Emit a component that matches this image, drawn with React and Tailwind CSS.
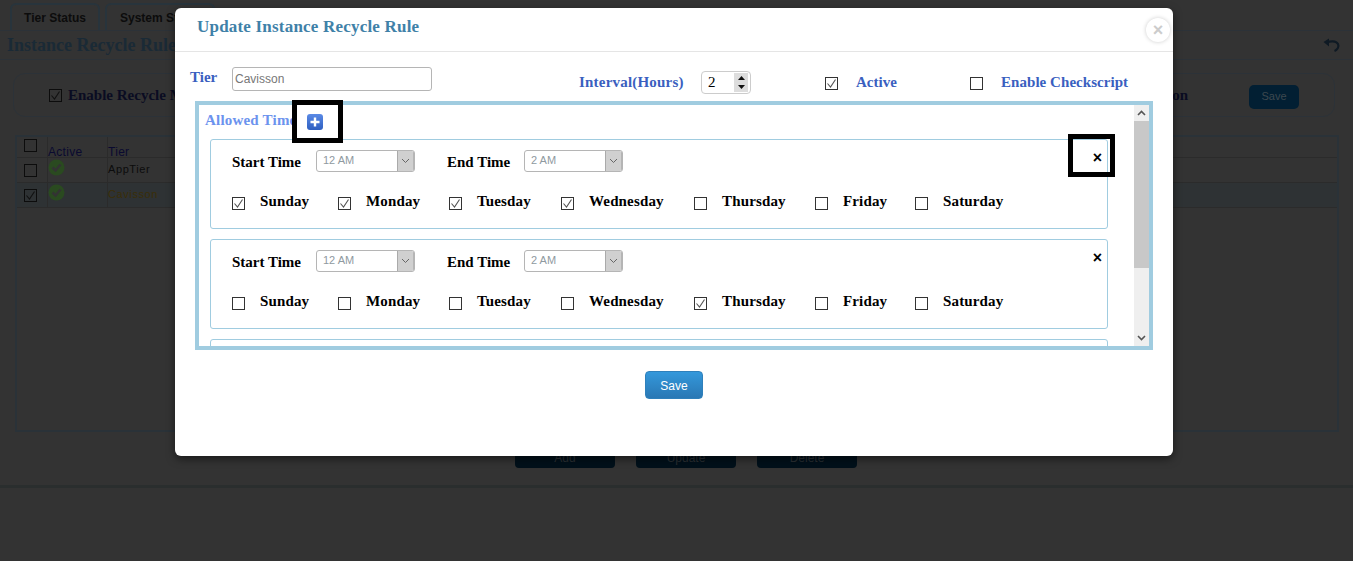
import React from "react";

const SERIF = "[font-family:'Liberation_Serif',serif]";
const SANS = "[font-family:'Liberation_Sans',Arial,sans-serif]";

const DAYS = [
  { name: "Sunday", width: "w-[106px]" },
  { name: "Monday", width: "w-[111px]" },
  { name: "Tuesday", width: "w-[112px]" },
  { name: "Wednesday", width: "w-[133px]" },
  { name: "Thursday", width: "w-[121px]" },
  { name: "Friday", width: "w-[100px]" },
  { name: "Saturday", width: "w-[110px]" },
];

const RULES = [
  { start: "12 AM", end: "2 AM", checked: ["Sunday", "Monday", "Tuesday", "Wednesday"] },
  { start: "12 AM", end: "2 AM", checked: ["Thursday"] },
];

const Check = ({ checked, dim }) => (
  <div
    className={`w-[13px] h-[13px] shrink-0 border ${
      dim ? "border-[#0c0c0c] bg-transparent" : "border-[#333] bg-white"
    } flex items-center justify-center`}
  >
    {checked && (
      <svg width="11" height="11" viewBox="0 0 11 11" fill="none">
        <path d="M1.5 5.5 L4.5 9 L9.5 1.5" stroke={dim ? "#111" : "#555"} strokeWidth="1.1" />
      </svg>
    )}
  </div>
);

const TimeSelect = ({ value }) => (
  <div className="w-[99px] h-[22px] border border-[#b5b5b5] rounded-[3px] flex bg-white overflow-hidden">
    <div className={`flex-1 pl-[6px] font-normal text-[11px] leading-[18px] text-[#8f9a9f] ${SANS}`}>{value}</div>
    <div className="w-[17px] bg-[#d0d0d0] border-l border-[#aaa] border-r border-r-[#b5b5b5] flex items-center justify-center">
      <svg width="9" height="6" viewBox="0 0 9 6" fill="none">
        <path d="M1 1 L4.5 4.5 L8 1" stroke="#666" strokeWidth="1" />
      </svg>
    </div>
  </div>
);

const RuleCard = ({ rule }) => (
  <div className="ml-[11px] w-[898px] h-[90px] mb-[10px] shrink-0 border border-[#a0cce0] rounded-[3px] pl-[21px] pt-[10px] pr-[5px]">
    <div className={`flex items-center h-[22px] font-bold text-[15px] text-black ${SERIF}`}>
      <div className="w-[84px] pt-[2px]">Start Time</div>
      <TimeSelect value={rule.start} />
      <div className="w-[77px] ml-[32px] pt-[2px]">End Time</div>
      <TimeSelect value={rule.end} />
      <div className={`ml-auto mb-[6px] text-[16px] font-bold leading-none ${SANS}`}>×</div>
    </div>
    <div className="flex mt-[20px]">
      {DAYS.map((day) => (
        <div key={day.name} className={`flex ${day.width} shrink-0`}>
          <div className="mt-[5px]">
            <Check checked={rule.checked.includes(day.name)} />
          </div>
          <div className={`ml-[15px] font-bold text-[15px] leading-[18px] tracking-[0.15px] text-black ${SERIF}`}>
            {day.name}
          </div>
        </div>
      ))}
    </div>
  </div>
);

const BackgroundRow = ({ name, nameColor, selected }) => (
  <div className={`flex h-[25px] border-b border-[#2b2b2b] ${selected ? "bg-[#2e3234]" : "bg-[#333]"}`}>
    <div className="w-[31px] pl-[7px] pt-[6px] border-r border-[#2b2b2b]">
      <Check checked={selected} dim />
    </div>
    <div className="w-[60px] pt-[1px] border-r border-[#2b2b2b]">
      <svg width="17" height="17" viewBox="0 0 17 17">
        <circle cx="8.5" cy="8.5" r="8" fill="#2a4a20" />
        <path d="M4.5 8.5 L7.5 11.5 L12.5 5.5" stroke="#333" strokeWidth="2.5" fill="none" />
      </svg>
    </div>
    <div className={`pt-[3px] text-[11px] tracking-[0.6px] ${nameColor} ${SANS}`}>{name}</div>
  </div>
);

const BottomButton = ({ label }) => (
  <div className={`w-[100px] h-[30px] rounded-[4px] bg-[#00101a] text-[#2a2f33] text-[12px] flex items-end justify-center pb-[1px] ${SANS}`}>
    {label}
  </div>
);

const Background = () => (
  <div className="h-[561px] bg-[#333] overflow-hidden flex flex-col">
    <div className={`flex h-[30px] pl-[10px] pt-[3px] gap-[5px] text-[12px] font-bold text-[#0c0c0c] ${SANS}`}>
      <div className="w-[90px] h-[27px] rounded-t-[6px] border-2 border-[#28343c] border-b-0 bg-[#333] flex items-center justify-center">
        Tier Status
      </div>
      <div className="w-[110px] h-[27px] rounded-t-[6px] border-2 border-[#28343c] border-b-0 bg-[#333] pl-[13px] flex items-center">
        System Stats
      </div>
    </div>
    <div className="h-[30px] border-y border-[#2c3238] flex items-center justify-between pl-[7px] pr-[12px] bg-[#333]">
      <div className={`font-bold text-[18px] text-[#1a2a36] ${SERIF}`}>Instance Recycle Rule</div>
      <svg width="18" height="15" viewBox="0 0 18 15" fill="none">
        <path d="M4 4.5 C7 3 13 2.5 15 6 C16.5 9 14 12 11.5 13" stroke="#0f1a24" strokeWidth="2.2" />
        <path d="M6 0.5 V8.5 L0.5 4 Z" fill="#0f1a24" />
      </svg>
    </div>
    <div className="mt-[13px] ml-[13px] mr-[18px] h-[44px] border border-[#2c3238] rounded-[12px] flex items-center pl-[35px]">
      <Check checked dim />
      <div className={`ml-[6px] font-bold text-[15px] text-[#0a0c22] ${SERIF}`}>Enable Recycle Mode</div>
      <div className={`ml-auto font-bold text-[15px] text-[#0a0c22] ${SERIF}`}>on</div>
      <div className={`ml-[61px] mr-[35px] mt-[3px] w-[50px] h-[24px] rounded-[5px] bg-[#021f33] text-[#3d484f] text-[11px] flex items-center justify-center ${SANS}`}>
        Save
      </div>
    </div>
    <div className="mt-[18px] ml-[15px] mr-[14px] h-[297px] border-2 border-[#2a3238]">
      <div className={`flex h-[21px] bg-[#333] border-b border-[#2b2b2b] text-[12px] text-[#0a0a30] ${SANS}`}>
        <div className="w-[31px] pl-[7px] pt-[2px] border-r border-[#2b2b2b]">
          <Check dim />
        </div>
        <div className="w-[60px] pt-[6px] tracking-[0.3px] border-r border-[#2b2b2b]">Active</div>
        <div className="pt-[6px] tracking-[0.3px]">Tier</div>
      </div>
      <BackgroundRow name="AppTier" nameColor="text-[#0c0c0c]" />
      <BackgroundRow name="Cavisson" nameColor="text-[#3a2e08]" selected />
    </div>
    <div className="mt-[6px] ml-[515px] flex gap-[21px] h-[30px]">
      <BottomButton label="Add" />
      <BottomButton label="Update" />
      <BottomButton label="Delete" />
    </div>
    <div className="mt-[17px] h-[3px] bg-[#2a2e2e]" />
  </div>
);

const Modal = () => (
  <div className="absolute top-[8px] left-[175px] w-[998px] h-[448px] bg-white rounded-[6px] shadow-[0_3px_9px_rgba(0,0,0,0.5)]">
    <div className="h-[44px] border-b border-[#e5e5e5] pl-[22px] pb-[5px] flex items-center">
      <div className={`font-bold text-[17px] tracking-[0.2px] text-[#3f81a8] ${SERIF}`}>Update Instance Recycle Rule</div>
    </div>

    <div className={`flex mt-[15px] h-[24px] pl-[15px] font-bold text-[15px] text-[#3a5fbf] ${SERIF}`}>
      <div className="w-[42px] leading-[20px]">Tier</div>
      <div className={`w-[200px] h-[24px] border border-[#b5b5b5] rounded-[3px] pl-[2px] font-normal text-[12px] leading-[22px] text-[#777] ${SANS}`}>
        Cavisson
      </div>
      <div className="ml-[147px] w-[122px] pt-[5px] leading-[20px] tracking-[0.2px]">Interval(Hours)</div>
      <div className="mt-[4px] w-[50px] h-[23px] border border-[#ccc] rounded-[4px] pl-[6px] flex justify-between pr-[2px] items-center">
        <span className={`text-[15px] font-normal text-black ${SERIF}`}>2</span>
        <div className="w-[14px] h-[19px] bg-[#ddd] flex flex-col items-center justify-around">
          <svg width="7" height="4" viewBox="0 0 7 4"><path d="M3.5 0 L7 4 H0 Z" fill="#111" /></svg>
          <svg width="7" height="4" viewBox="0 0 7 4"><path d="M0 0 H7 L3.5 4 Z" fill="#111" /></svg>
        </div>
      </div>
      <div className="ml-[74px] mt-[10px]">
        <Check checked />
      </div>
      <div className="ml-[18px] w-[115px] pt-[5px] leading-[20px]">Active</div>
      <div className="-ml-[1px] mt-[10px]">
        <Check />
      </div>
      <div className="ml-[18px] pt-[5px] leading-[20px] tracking-[0.05px]">Enable Checkscript</div>
    </div>

    <div className="mt-[10px] ml-[20px] w-[958px] h-[249px] border-4 border-[#a0cce0] flex">
      <div className="flex-1 overflow-hidden">
        <div className="h-[34px] pl-[6px] flex items-center">
          <div className={`mb-[3px] font-bold text-[15px] text-[#6c93ee] tracking-[0.2px] ${SERIF}`}>Allowed Time</div>
          <div className="ml-[11px] w-[16px] h-[16px] rounded-[3px] bg-gradient-to-b from-[#5a8ae6] to-[#2f5fc0] flex items-center justify-center">
            <svg width="10" height="10" viewBox="0 0 10 10">
              <path d="M5 0.5 V9.5 M0.5 5 H9.5" stroke="#fff" strokeWidth="2.4" />
            </svg>
          </div>
        </div>
        {RULES.map((rule, index) => (
          <RuleCard key={index} rule={rule} />
        ))}
        {/* next rule is scrolled out of view, only its top edge shows */}
        <div className="ml-[11px] w-[898px] h-[90px] border border-[#a0cce0] rounded-[3px]" />
      </div>
      <div className="w-[15px] bg-[#efefef] flex flex-col items-center">
        <div className="h-[16px] flex items-center justify-center">
          <svg width="9" height="6" viewBox="0 0 9 6" fill="none">
            <path d="M1 5 L4.5 1.5 L8 5" stroke="#555" strokeWidth="1.6" />
          </svg>
        </div>
        <div className="w-full h-[147px] bg-[#c8c8c8]" />
        <div className="mt-auto h-[17px] flex items-center justify-center">
          <svg width="9" height="6" viewBox="0 0 9 6" fill="none">
            <path d="M1 1 L4.5 4.5 L8 1" stroke="#555" strokeWidth="1.6" />
          </svg>
        </div>
      </div>
    </div>

    <div className="mt-[21px] flex justify-center">
      <div className={`w-[58px] h-[28px] pt-[2px] rounded-[4px] border border-[#2f80bb] bg-gradient-to-b from-[#3498db] to-[#2a78b4] text-white text-[12px] flex items-center justify-center ${SANS}`}>
        Save
      </div>
    </div>

    {/* close button sits on the corner of the header */}
    <div className={`absolute top-[10px] left-[971px] w-[24px] h-[24px] rounded-full bg-white shadow-[0_0_4px_rgba(0,0,0,0.2)] text-[#ccc] font-bold text-[18px] leading-[24px] text-center ${SANS}`}>
      ×
    </div>

    {/* black highlight boxes drawn over the screenshot */}
    <div className="absolute top-[92px] left-[117px] w-[51px] h-[43px] border-[5px] border-black" />
    <div className="absolute top-[126px] left-[893px] w-[47px] h-[43px] border-[5px] border-black" />
  </div>
);

const App = () => {
  return (
    <div className="relative w-[1353px] h-[561px] overflow-hidden">
      <Background />
      <Modal />
    </div>
  );
};

export default App;
